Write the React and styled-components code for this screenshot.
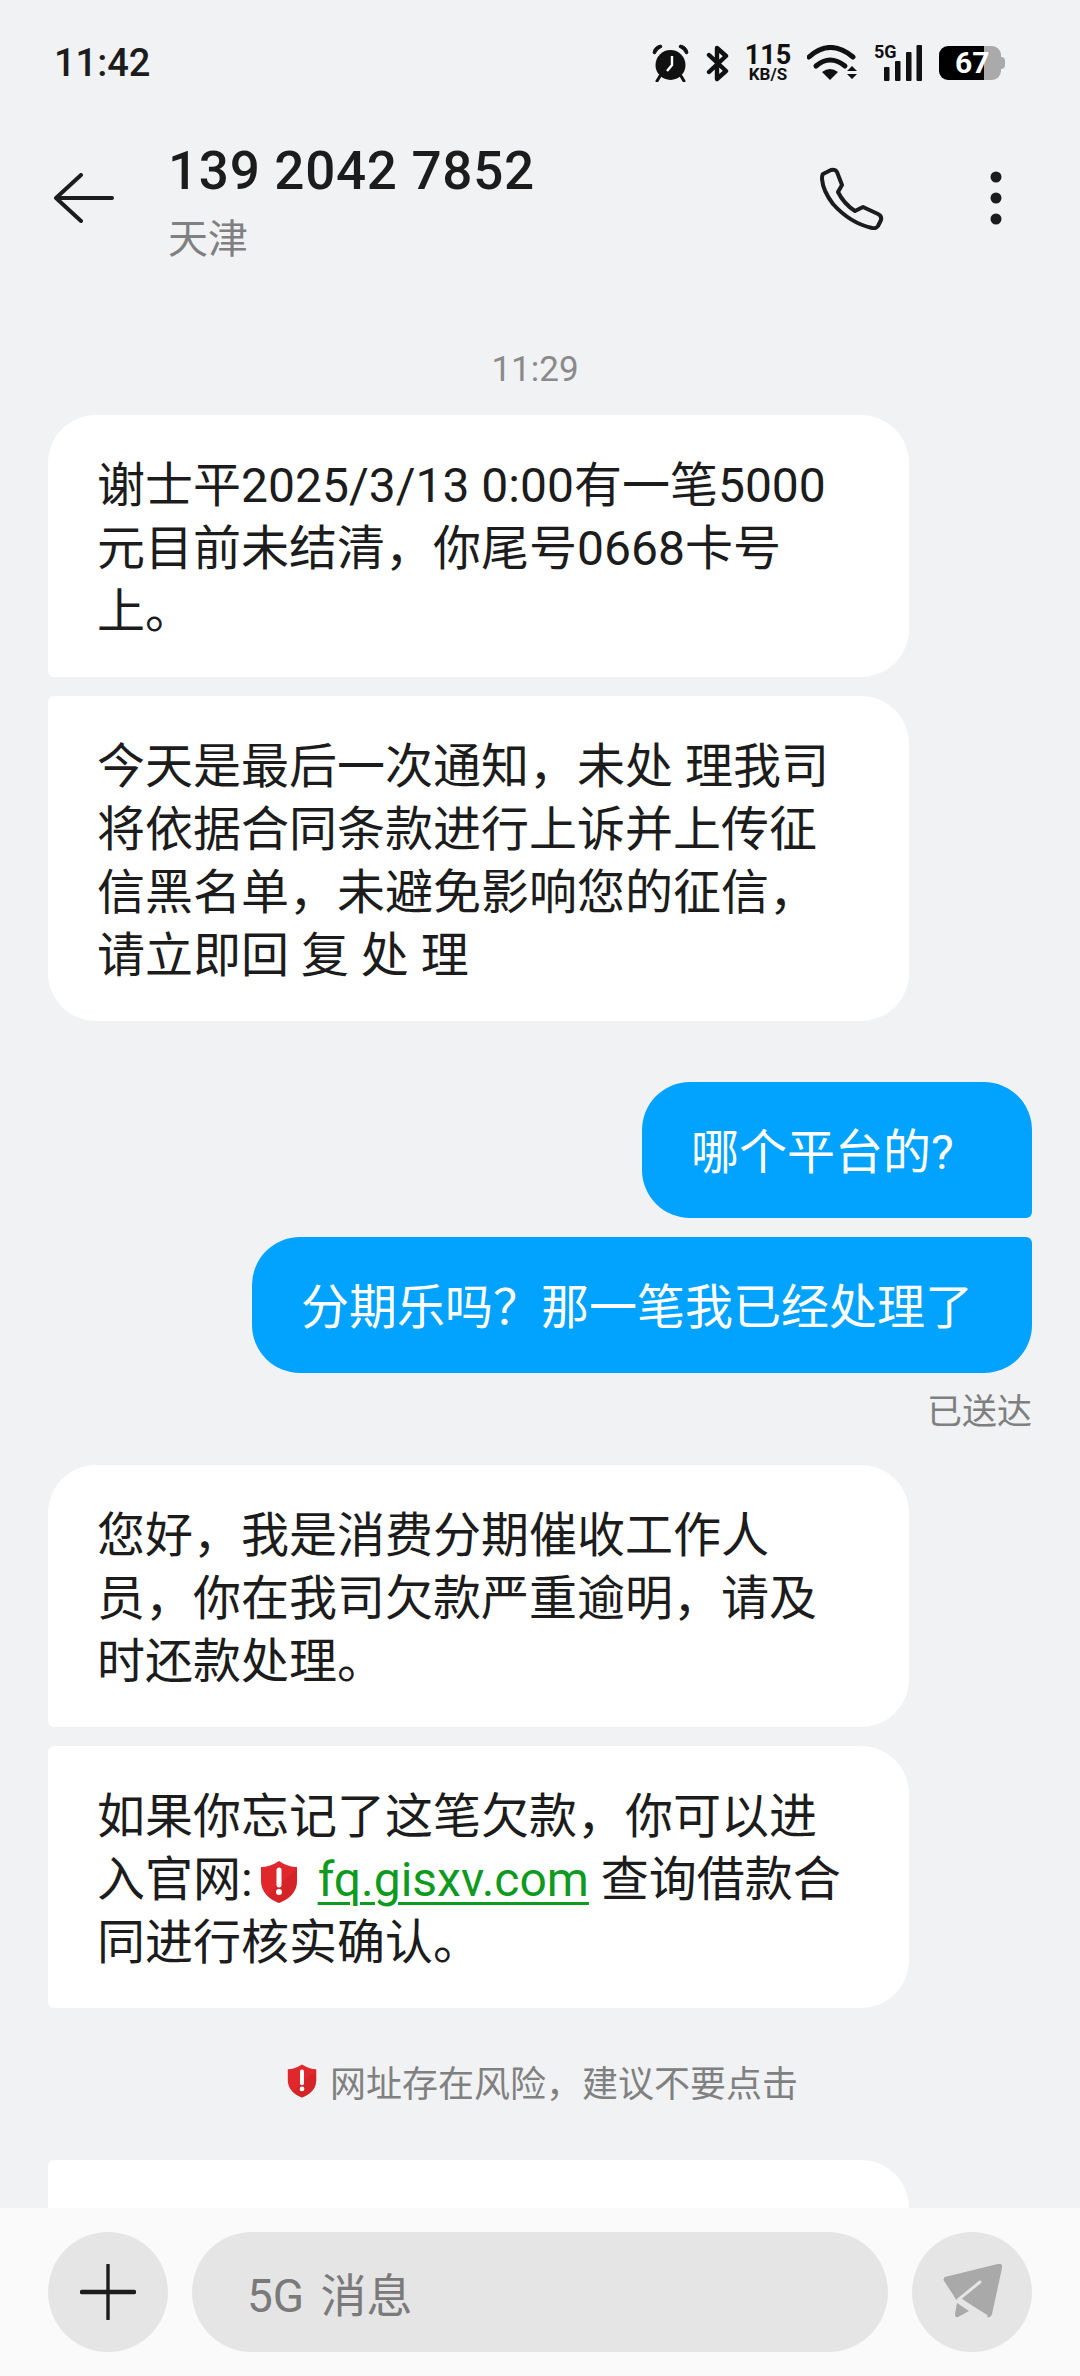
import React from 'react';
import styled, { createGlobalStyle } from 'styled-components';

const GlobalStyle = createGlobalStyle`
  html, body {
    margin: 0;
    padding: 0;
    background: #f0f2f4;
  }
  * {
    box-sizing: border-box;
  }
`;

const Screen = styled.div`
  width: 1080px;
  height: 2376px;
  display: flex;
  flex-direction: column;
  overflow: hidden;
  background: #f0f2f4;
  color: #1c1c1c;
  font-family: Roboto, 'Noto Sans CJK SC', sans-serif;
`;

const StatusBar = styled.div`
  flex: none;
  height: 126px;
  padding: 0 75px 0 54px;
  display: flex;
  align-items: center;
  justify-content: space-between;
`;

const Clock = styled.div`
  font-size: 38px;
  font-weight: 500;
`;

const StatusIcons = styled.div`
  display: flex;
  align-items: center;
  gap: 17px;
`;

const Speed = styled.div`
  width: 44px;
  display: flex;
  flex-direction: column;
  align-items: center;
  font-weight: 700;
  color: #111;
`;

const SpeedValue = styled.span`
  font-size: 27px;
  line-height: 23px;
`;

const SpeedUnit = styled.span`
  font-size: 17px;
  line-height: 15px;
`;

const Signal = styled.div`
  position: relative;
  width: 48px;
  height: 36px;
`;

const NetworkLabel = styled.span`
  position: absolute;
  left: 0;
  top: -2px;
  font-size: 18px;
  line-height: 18px;
  font-weight: 700;
  color: #111;
`;

const Battery = styled.div`
  position: relative;
  width: 62px;
  height: 34px;
  margin-right: 4px;
  border-radius: 9px;
  background: linear-gradient(to right, #000 45px, #aaa 45px);
  color: #fff;
  font-size: 30px;
  font-weight: 700;
  line-height: 34px;
  padding-left: 16px;

  &::after {
    content: '';
    position: absolute;
    right: -4px;
    top: 11px;
    width: 4px;
    height: 12px;
    border-radius: 0 4px 4px 0;
    background: #aaa;
  }
`;

const Header = styled.div`
  flex: none;
  height: 144px;
  padding: 0 78px 0 54px;
  display: flex;
  align-items: center;
`;

const Contact = styled.div`
  flex: 1;
  align-self: flex-start;
  margin-left: 54px;
  padding-top: 12px;
`;

const Number = styled.div`
  font-size: 53px;
  font-weight: 500;
  line-height: 66px;
  letter-spacing: 0.7px;
`;

const Region = styled.div`
  margin-top: 3px;
  font-size: 40px;
  line-height: 66px;
  color: #808080;
`;

const HeaderAction = styled.div`
  display: flex;
  align-items: center;
  margin-left: ${(p) => p.$gap || 0}px;
`;

const Messages = styled.div`
  flex: 1;
  min-height: 0;
  overflow: hidden;
  padding: 67px 48px 0;
  display: flex;
  flex-direction: column;
`;

const Timestamp = styled.div`
  font-size: 35px;
  line-height: 60px;
  margin-bottom: 18px;
  padding: 3px 10px 0 0;
  height: 60px;
  text-align: center;
  color: #8a8a8a;
`;

const Group = styled.div`
  display: flex;
  flex-direction: column;
  align-items: ${(p) => (p.$out ? 'flex-end' : 'flex-start')};
  gap: 19px;
  margin-bottom: ${(p) => p.$after || 0}px;
  flex: none;
`;

const Bubble = styled.div`
  width: ${(p) => p.$width || 861}px;
  flex: none;
  padding: 38.5px 20px 34.5px 49px;
  font-size: 48px;
  line-height: 63px;
  white-space: pre;
  border-radius: ${(p) => p.$corners};
  background: ${(p) => (p.$out ? '#02a2ff' : '#fff')};
  color: ${(p) => (p.$out ? '#fff' : '#1c1c1c')};
`;

const RiskyLink = styled.span`
  color: #0e9a1e;
  text-decoration: underline;
  text-underline-offset: 6px;
  text-decoration-thickness: 3px;
`;

const InlineShield = styled.svg`
  width: 38px;
  height: 42px;
  margin: 0 20px -7px 7px;
`;

const Delivered = styled.div`
  flex: none;
  font-size: 35px;
  line-height: 48px;
  margin: 16px 0 28px 0;
  text-align: right;
  color: #7f7f7f;
`;

const RiskNotice = styled.div`
  flex: none;
  height: 60px;
  margin: 43px 0 49px;
  padding-left: 5px;
  display: flex;
  align-items: center;
  justify-content: center;
  gap: 13px;
  font-size: 36px;
  color: #808080;
`;

const NoticeShield = styled.svg`
  width: 30px;
  height: 34px;
`;

const Composer = styled.div`
  flex: none;
  height: 168px;
  padding: 24px 48px;
  display: flex;
  align-items: center;
  gap: 24px;
  background: #fafafa;
`;

const RoundButton = styled.div`
  flex: none;
  width: 120px;
  height: 120px;
  border-radius: 50%;
  background: #e5e5e5;
  display: flex;
  align-items: center;
  justify-content: center;
`;

const Input = styled.div`
  flex: 1;
  height: 120px;
  border-radius: 60px;
  background: #e5e5e5;
  padding-left: 55px;
  display: flex;
  align-items: center;
  font-size: 46px;
  word-spacing: 5px;
  color: #7a7a7a;
`;

// status bar drawings
const AlarmIcon = () => (
  <svg width="37" height="38" viewBox="0 0 37 38">
    <circle cx="18.5" cy="21" r="15" fill="#111" />
    <path d="M1 9 Q2 2 9 1 L10 3 Q5 5 3 10 Z M36 9 Q35 2 28 1 L27 3 Q32 5 34 10 Z" fill="#111" stroke="#111" />
    <path d="M8 32 L5 37 M29 32 L32 37" stroke="#111" strokeWidth="3" strokeLinecap="round" />
    <path d="M20 12 V21 L15 27" stroke="#fff" strokeWidth="2.4" fill="none" />
  </svg>
);

const BluetoothIcon = () => (
  <svg width="23" height="37" viewBox="0 0 23 37">
    <path
      d="M3 10 L20 26 L11 34 V3 L20 11 L3 27"
      fill="none"
      stroke="#111"
      strokeWidth="4.4"
      strokeLinejoin="round"
      strokeLinecap="round"
    />
  </svg>
);

const WifiIcon = () => (
  <svg width="50" height="36" viewBox="0 0 50 36">
    <path d="M2 12 Q23 -7 46 12" fill="none" stroke="#111" strokeWidth="5" strokeLinecap="round" />
    <path d="M9 21 Q23 9 38 21" fill="none" stroke="#111" strokeWidth="5" strokeLinecap="round" />
    <path d="M15 27 Q23 21 31 27 L23 35 Z" fill="#111" />
    <path d="M40 26 L45 21 L50 26 Z M40 29 H50 L45 34 Z" fill="#111" />
  </svg>
);

const SignalBars = () => (
  <svg width="48" height="36" viewBox="0 0 48 36">
    <rect x="10" y="22" width="5.5" height="14" rx="1" fill="#111" />
    <rect x="21" y="16" width="5.5" height="20" rx="1" fill="#111" />
    <rect x="32" y="7" width="5.5" height="29" rx="1" fill="#111" />
    <rect x="42.5" y="0" width="5.5" height="36" rx="1" fill="#111" />
  </svg>
);

const PhoneIcon = () => (
  <svg width="64" height="64" viewBox="0 0 64 64">
    <path
      d="M3 8 L11 4 Q15 3 17 6 L22 19 L18 26 Q24 38 35 45 L43 41 L58 48 Q62 50 61 54 L58 60 Q56 63 52 62 Q30 57 13 38 Q3 25 2 13 Q2 9 3 8 Z"
      fill="none"
      stroke="#1c1c1c"
      strokeWidth="4"
      strokeLinejoin="round"
    />
  </svg>
);

const ShieldShape = () => (
  <>
    <path d="M19 0 C25 4 31 6 37 6 V20 C37 31 29 38 19 42 C9 38 1 31 1 20 V6 C7 6 13 4 19 0 Z" fill="#e0282c" />
    <path d="M37 8 V20 C37 31 29 38 19 42 C14 40 10 38 7 34 Z" fill="#cc2025" opacity="0.55" />
    <path d="M19 9 V24" stroke="#fff" strokeWidth="5" strokeLinecap="round" />
    <circle cx="19" cy="31" r="3" fill="#fff" />
  </>
);

const App = () => (
  <Screen>
    <GlobalStyle />
    <StatusBar>
      <Clock>11:42</Clock>
      <StatusIcons>
        <AlarmIcon />
        <BluetoothIcon />
        <Speed>
          <SpeedValue>115</SpeedValue>
          <SpeedUnit>KB/S</SpeedUnit>
        </Speed>
        <WifiIcon />
        <Signal>
          <SignalBars />
          <NetworkLabel>5G</NetworkLabel>
        </Signal>
        <Battery>67</Battery>
      </StatusIcons>
    </StatusBar>

    <Header>
      <svg width="60" height="50" viewBox="0 0 60 50">
        <path
          d="M58 25 H3 M27 2 L2 25 L27 48"
          fill="none"
          stroke="#1c1c1c"
          strokeWidth="4"
          strokeLinecap="round"
          strokeLinejoin="round"
        />
      </svg>
      <Contact>
        <Number>139 2042 7852</Number>
        <Region>天津</Region>
      </Contact>
      <HeaderAction>
        <PhoneIcon />
      </HeaderAction>
      <HeaderAction $gap={106}>
        <svg width="12" height="54" viewBox="0 0 12 54">
          <circle cx="6" cy="6" r="5.5" fill="#1c1c1c" />
          <circle cx="6" cy="27" r="5.5" fill="#1c1c1c" />
          <circle cx="6" cy="48" r="5.5" fill="#1c1c1c" />
        </svg>
      </HeaderAction>
    </Header>

    <Messages>
      <Timestamp>11:29</Timestamp>

      <Group $after={61}>
        <Bubble $corners="48px 48px 48px 6px">
          谢士平2025/3/13 0:00有一笔5000
          <br />
          元目前未结清，你尾号0668卡号
          <br />
          上。
        </Bubble>
        <Bubble $corners="6px 48px 48px 48px">
          今天是最后一次通知，未处 理我司
          <br />
          将依据合同条款进行上诉并上传征
          <br />
          信黑名单，未避免影响您的征信，
          <br />
          请立即回 复 处 理
        </Bubble>
      </Group>

      <Group $out>
        <Bubble $out $width={390} $corners="48px 48px 6px 48px">
          哪个平台的?
        </Bubble>
        <Bubble $out $width={780} $corners="48px 6px 48px 48px">
          分期乐吗？那一笔我已经处理了
        </Bubble>
      </Group>
      <Delivered>已送达</Delivered>

      <Group>
        <Bubble $corners="48px 48px 48px 6px">
          您好，我是消费分期催收工作人
          <br />
          员，你在我司欠款严重逾明，请及
          <br />
          时还款处理。
        </Bubble>
        <Bubble $corners="6px 48px 48px 6px">
          如果你忘记了这笔欠款，你可以进
          <br />
          入官网:
          <InlineShield viewBox="0 0 38 42">
            <ShieldShape />
          </InlineShield>
          <RiskyLink>fq.gisxv.com</RiskyLink> 查询借款合
          <br />
          同进行核实确认。
        </Bubble>
      </Group>

      <RiskNotice>
        <NoticeShield viewBox="0 0 38 42">
          <ShieldShape />
        </NoticeShield>
        网址存在风险，建议不要点击
      </RiskNotice>

      <Group>
        <Bubble $corners="6px 48px 48px 48px">
          <br />
          <br />
        </Bubble>
      </Group>
    </Messages>

    <Composer>
      <RoundButton>
        <svg width="56" height="56" viewBox="0 0 56 56">
          <path d="M28 1 V55" stroke="#1c1c1c" strokeWidth="3.4" strokeLinecap="round" />
          <path d="M2 28 H54" stroke="#1c1c1c" strokeWidth="4.4" strokeLinecap="round" />
        </svg>
      </RoundButton>
      <Input>5G 消息</Input>
      <RoundButton>
        <svg width="60" height="56" viewBox="0 0 60 56">
          <path
            d="M3 14 L56 1 Q60 0 59 4 L49 50 Q47 54 44 51 L19 33 L38 18 L15 35 Z"
            fill="#a9a9a9"
            stroke="#a9a9a9"
            strokeWidth="2"
            strokeLinejoin="round"
          />
          <path d="M2 15 L15 35" stroke="#a9a9a9" strokeWidth="2" />
          <path d="M15 39 L27 47 L16 53 Q13 54 13 50 Z" fill="#a9a9a9" />
          <path d="M38 18 L17 35 L44 52" fill="none" stroke="#e5e5e5" strokeWidth="3" strokeLinecap="round" />
        </svg>
      </RoundButton>
    </Composer>
  </Screen>
);

export default App;
